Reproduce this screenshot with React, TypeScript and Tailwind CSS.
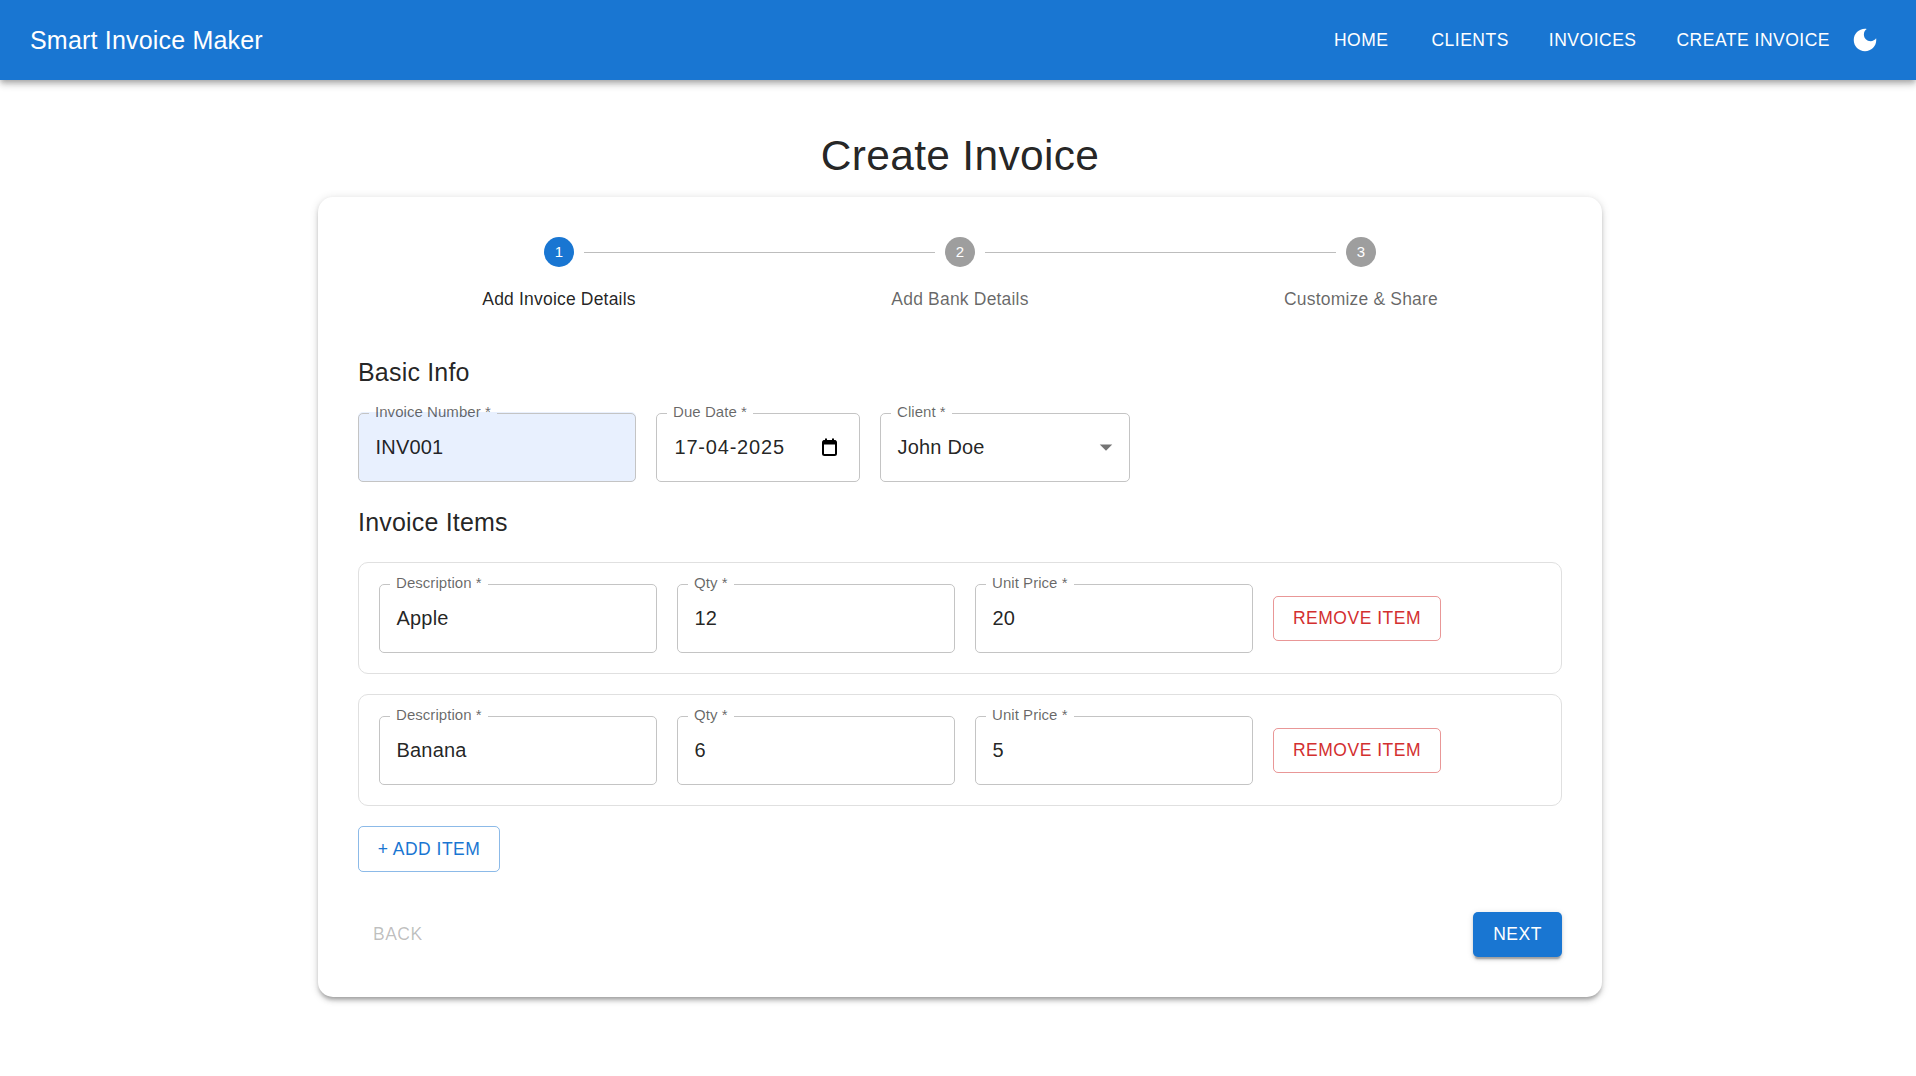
import React from 'react';

const font = 'font-["Liberation_Sans",Arial,sans-serif]';

type FieldProps = {
  label: string;
  value: string;
  width: string;
  autofill?: boolean;
  children?: React.ReactNode;
  spaced?: boolean;
};

const Field = ({ label, value, width, autofill, children, spaced }: FieldProps) => {
  return (
    <div className={`relative h-[70px] ${width} shrink-0`}>
      <div className={`flex h-full items-center rounded-[5px] pl-[17.5px] pr-[14px] ${autofill ? 'bg-[#e8f0fe]' : ''}`}>
        <span className={`flex-1 text-[20px] text-[#000000de] ${spaced ? 'ml-px tracking-[0.8px]' : 'tracking-[0.19px]'}`}>{value}</span>
        {children}
      </div>
      {/* Notched outline */}
      <fieldset className="pointer-events-none absolute inset-x-0 top-[-6px] bottom-0 m-0 rounded-[5px] border border-[#c4c4c4] px-[10px] py-0">
        <legend className="invisible h-[14px] px-[6px] text-[15px] leading-[14px] tracking-[0.05px]">{label} *</legend>
      </fieldset>
      <label className="absolute left-[17px] top-[-11px] text-[15px] leading-[21px] tracking-[0.05px] text-[#00000099]">
        {label} *
      </label>
    </div>
  );
};

const InvoiceItem = ({ name, qty, price }: { name: string; qty: string; price: string }) => {
  return (
    <div className="flex items-center gap-5 rounded-[10px] border border-[#e0e0e0] p-5">
      <Field label="Description" value={name} width="w-[278px]" />
      <Field label="Qty" value={qty} width="w-[278px]" />
      <Field label="Unit Price" value={price} width="w-[278px]" />
      <button className="h-[45px] w-[168px] rounded-[5px] border border-[#d32f2f80] text-[17.5px] tracking-[0.5px] text-[#d32f2f]">
        REMOVE ITEM
      </button>
    </div>
  );
};

const Step = ({ n, label, active }: { n: number; label: string; active?: boolean }) => {
  return (
    <div className="flex w-[160px] shrink-0 flex-col items-center">
      <div className={`flex h-[30px] w-[30px] items-center justify-center rounded-full text-[15px] tracking-[0.2px] text-white ${active ? 'bg-[#1976d2]' : 'bg-[#9e9e9e]'}`}>
        {n}
      </div>
      <div className={`mt-[20px] whitespace-nowrap text-[17.5px] leading-[25px] tracking-[0.19px] ${active ? 'text-[#000000de]' : 'text-[#00000099]'}`}>
        {label}
      </div>
    </div>
  );
};

const navLinks = [
  { label: 'HOME', cls: 'ml-0' },
  { label: 'CLIENTS', cls: 'ml-[23px]' },
  { label: 'INVOICES', cls: 'ml-[20px]' },
  { label: 'CREATE INVOICE', cls: 'ml-[20px]' },
];

export default function App() {
  return (
    <div className={`min-h-screen bg-white ${font}`}>
      {/* Header */}
      <header className="relative flex h-[80px] items-center justify-between bg-[#1976d2] pl-[30px] pr-[26px] text-white shadow-[0_2.5px_5px_-1px_rgba(0,0,0,0.2),0_5px_6px_0_rgba(0,0,0,0.14),0_1px_12px_0_rgba(0,0,0,0.12)]">
        <div className="mt-px text-[25px] tracking-[0.19px]">Smart Invoice Maker</div>
        <nav className="flex items-center">
          {navLinks.map((link) => (
            <button key={link.label} className={`px-[10px] text-[17.5px] tracking-[0.5px] ${link.cls}`}>
              {link.label}
            </button>
          ))}
          <button className="flex h-[50px] w-[50px] items-center justify-center">
            <svg width="30" height="30" viewBox="0 0 24 24" fill="currentColor">
              <path d="M12 3c-4.97 0-9 4.03-9 9s4.03 9 9 9 9-4.03 9-9c0-.46-.04-.92-.1-1.36-.98 1.37-2.58 2.26-4.4 2.26-2.98 0-5.4-2.42-5.4-5.4 0-1.81.89-3.42 2.26-4.4-.44-.06-.9-.1-1.36-.1z" />
            </svg>
          </button>
        </nav>
      </header>

      <main className="flex flex-col items-center pl-[4px] pt-[51px]">
        <h1 className="text-[42.5px] leading-[50px] tracking-[0.31px] text-[#000000de]">Create Invoice</h1>

        {/* Card */}
        <div className="mt-[16px] h-[800px] w-[1284px] rounded-[15px] bg-white px-[40px] pt-[40px] shadow-[0_3.75px_3.75px_-2.5px_rgba(0,0,0,0.2),0_3.75px_5px_0_rgba(0,0,0,0.14),0_1.25px_10px_0_rgba(0,0,0,0.12)]">
          {/* Stepper */}
          <div className="flex items-start justify-between px-[121px]">
            <Step n={1} label="Add Invoice Details" active />
            <div className="mx-[-55px] mt-[15px] h-px flex-1 bg-[#bdbdbd]" />
            <Step n={2} label="Add Bank Details" />
            <div className="mx-[-55px] mt-[15px] h-px flex-1 bg-[#bdbdbd]" />
            <Step n={3} label="Customize & Share" />
          </div>

          {/* Basic info */}
          <h2 className="mt-[45px] text-[25px] leading-[30px] tracking-[0.19px] text-[#000000de]">Basic Info</h2>
          <div className="mt-[25px] flex gap-5">
            <Field label="Invoice Number" value="INV001" width="w-[278px]" autofill />
            <Field label="Due Date" value="17-04-2025" width="w-[204px]" spaced>
              <svg width="20" height="20" viewBox="0 0 20 20" fill="none" className="mr-[6px]">
                <rect x="3" y="4" width="13" height="14" rx="1.5" stroke="#000" strokeWidth="2" />
                <rect x="3" y="3.5" width="13" height="4" fill="#000" />
                <rect x="5" y="1.5" width="2" height="3" fill="#000" />
                <rect x="12" y="1.5" width="2" height="3" fill="#000" />
              </svg>
            </Field>
            <Field label="Client" value="John Doe" width="w-[250px]">
              <svg width="30" height="30" viewBox="0 0 24 24" fill="#0000008a" className="mr-[-5px]">
                <path d="M7 10l5 5 5-5z" />
              </svg>
            </Field>
          </div>

          {/* Invoice items */}
          <h2 className="mt-[25px] text-[25px] leading-[30px] tracking-[0.19px] text-[#000000de]">Invoice Items</h2>
          <div className="mt-[25px] flex flex-col gap-5">
            <InvoiceItem name="Apple" qty="12" price="20" />
            <InvoiceItem name="Banana" qty="6" price="5" />
          </div>

          <button className="mt-[20px] block h-[46px] w-[142px] rounded-[5px] border border-[#1976d280] text-[17.5px] tracking-[0.5px] text-[#1976d2]">
            + ADD ITEM
          </button>

          {/* Footer actions */}
          <div className="mt-[40px] flex items-center justify-between">
            <button className="px-[15px] text-[17.5px] tracking-[0.5px] text-[#00000042]">BACK</button>
            <button className="h-[45px] w-[89px] rounded-[5px] bg-[#1976d2] text-[17.5px] tracking-[0.5px] text-white shadow-[0_3.75px_1.25px_-2.5px_rgba(0,0,0,0.2),0_2.5px_2.5px_0_rgba(0,0,0,0.14),0_1.25px_6px_0_rgba(0,0,0,0.12)]">
              NEXT
            </button>
          </div>
        </div>
      </main>
    </div>
  );
}
